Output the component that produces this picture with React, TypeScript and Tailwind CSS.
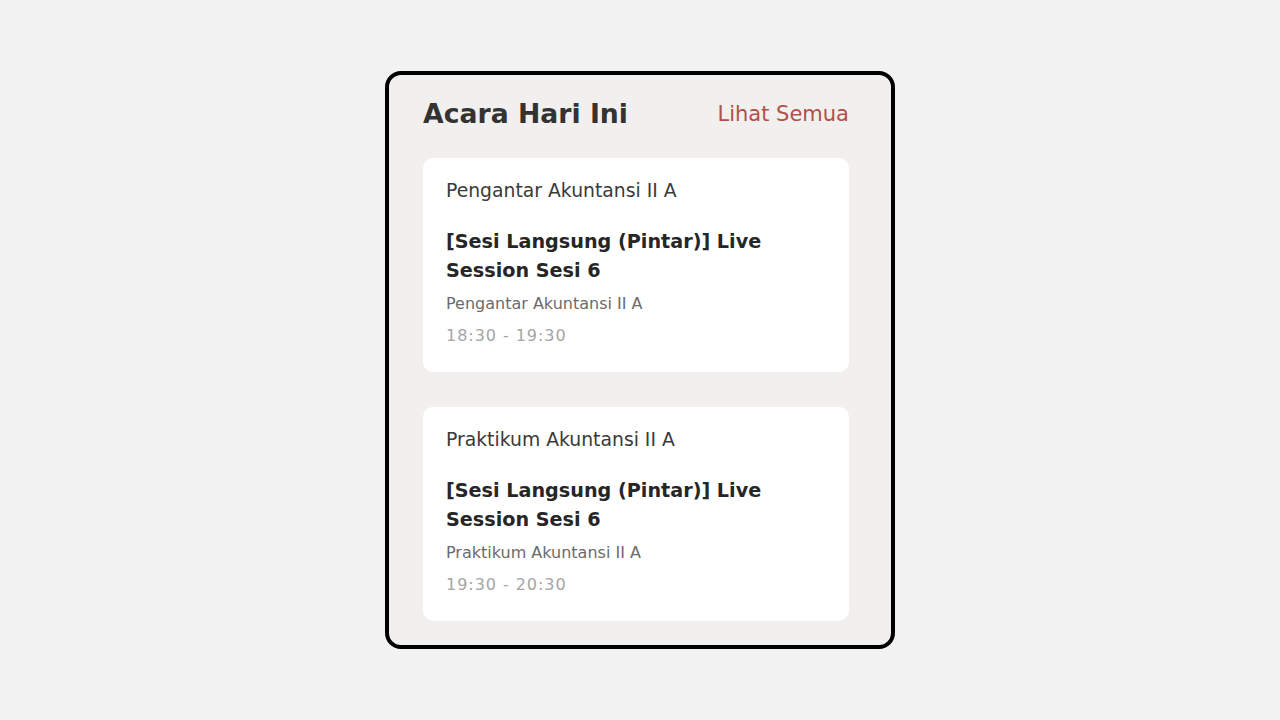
const events = [
  { course: "Pengantar Akuntansi II A", title: "[Sesi Langsung (Pintar)] Live Session Sesi 6", time: "18:30 - 19:30" },
  { course: "Praktikum Akuntansi II A", title: "[Sesi Langsung (Pintar)] Live Session Sesi 6", time: "19:30 - 20:30" },
];

const EventCard = ({ course, title, time }: { course: string; title: string; time: string }) => (
  <div className="bg-white rounded-[10px] px-[23px] pt-[21px] pb-[25px]">
    <p className="text-[18.8px] leading-[24px] text-[#3a3a3a]">{course}</p>
    <h4 className="mt-[24px] text-[19.2px] leading-[29px] font-bold text-[#262626]">{title}</h4>
    <p className="mt-[8px] text-[16px] leading-[22px] text-[#6b6b6b]">{course}</p>
    <p className="mt-[10px] text-[16px] leading-[22px] text-[#a5a5a5] tracking-[0.06em]">{time}</p>
  </div>
);

export default function App() {
  return (
    <div
      className="min-h-screen w-full bg-[#f2f2f2] flex justify-center pt-[71px]"
      style={{ fontFamily: "'DejaVu Sans', 'Noto Sans', sans-serif" }}
    >
      <div className="w-[510px] h-[578px] border-[4px] border-black rounded-[16px] bg-[#f2f0ef] pl-[34px] pr-[42px] pt-[21px]">
        <div className="flex items-center justify-between">
          <h3 className="text-[26.7px] leading-[36px] font-bold text-[#333333]">Acara Hari Ini</h3>
          <a className="text-[21px] leading-[36px] text-[#b0504a]">Lihat Semua</a>
        </div>
        <div className="mt-[26px] flex flex-col gap-[35px]">
          {events.map((e) => (
            <EventCard key={e.time} {...e} />
          ))}
        </div>
      </div>
    </div>
  );
}
